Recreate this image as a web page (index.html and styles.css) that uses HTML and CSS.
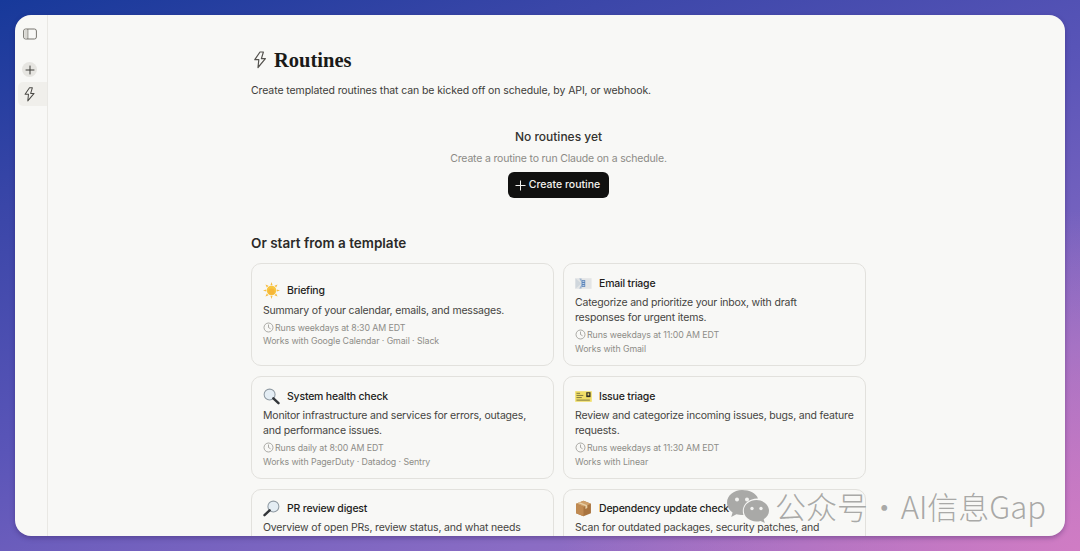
FILE: index.html
```html
<!DOCTYPE html>
<html lang="en">
<head>
<meta charset="utf-8">
<title>Routines</title>
<link rel="stylesheet" href="styles.css">
</head>
<body>
<svg class="defs" width="0" height="0" aria-hidden="true">
  <defs>
    <symbol id="bolt" viewBox="0 0 20 20"><path d="M10 2h3.400l-2 6.700h4L8 17.500l.8-7.800h-4z" fill="none" stroke="currentColor" stroke-width="1.200" stroke-linejoin="round"/></symbol>
    <symbol id="clock" viewBox="0 0 12 12"><circle cx="6" cy="6" r="4.900" fill="none" stroke="currentColor" stroke-width=".8"/><path d="M6 3.200V6l1.900 1.200" fill="none" stroke="currentColor" stroke-width=".8" stroke-linecap="round"/></symbol>
    <symbol id="lens" viewBox="0 0 18 18"><circle cx="7" cy="7" r="5.800" fill="#e4edf4" stroke="#8f9aa3" stroke-width="1.100"/><path d="M11 11l5.400 5" stroke="#33363a" stroke-width="2.600" stroke-linecap="round"/></symbol>
  </defs>
</svg>
<div class="window">
  <aside class="sidebar">
    <svg class="side-toggle" width="14" height="12" viewBox="0 0 14 12"><rect x=".6" y="1" width="12.800" height="10" rx="2" fill="none" stroke="#77756f" stroke-width="1"/><path d="M4.800 1v10" stroke="#77756f" stroke-width="1"/><rect x="1.400" y="1.800" width="3" height="8.400" fill="#d9d8d3"/></svg>
    <div class="side-plus"><svg width="10" height="10" viewBox="0 0 10 10"><path d="M5 .6v8.800M.6 5h8.800" stroke="#3d3c39" stroke-width="1"/></svg></div>
    <div class="side-active"><svg class="ico-side" width="17" height="17"><use href="#bolt"/></svg></div>
  </aside>
  <main class="main">
    <div class="column">
      <header class="page-head">
        <svg class="ico-head" width="20" height="20"><use href="#bolt"/></svg>
        <h1>Routines</h1>
      </header>
      <p class="lede">Create templated routines that can be kicked off on schedule, by API, or webhook.</p>
      <section class="empty">
        <h2>No routines yet</h2>
        <p>Create a routine to run Claude on a schedule.</p>
        <button class="cta"><svg width="11" height="11" viewBox="0 0 11 11"><path d="M5.500 .5v10M.5 5.500h10" stroke="#f4f3ef" stroke-width="1"/></svg>Create routine</button>
      </section>
      <h3 class="tpl-title">Or start from a template</h3>
      <div class="grid">
        <article class="card">
          <div class="card-title">
            <svg class="emoji" width="17" height="17" viewBox="0 0 16 16"><path d="M8 0l1 3H7zM8 16l-1-3h2zM0 8l3-1v2zM16 8l-3 1V7zM2.300 2.300l2.900 1.300-1.600 1.600zM13.700 13.700l-2.900-1.300 1.600-1.600zM13.700 2.300l-1.300 2.900-1.600-1.600zM2.300 13.700l1.300-2.900 1.600 1.600z" fill="#f6bd45"/><circle cx="8" cy="8" r="4.500" fill="#f8c640"/><circle cx="8" cy="9" r="3" fill="#f3a52f" opacity=".5"/></svg>
            <span>Briefing</span>
          </div>
          <p class="desc">Summary of your calendar, emails, and messages.</p>
          <div class="meta"><svg class="ico-clock" width="11" height="11"><use href="#clock"/></svg>Runs weekdays at 8:30 AM EDT</div>
          <div class="meta">Works with Google Calendar · Gmail · Slack</div>
        </article>
        <article class="card">
          <div class="card-title">
            <svg class="emoji" width="17" height="17" viewBox="0 0 16 16"><rect x=".4" y="3" width="15.200" height="10" fill="#e3e5e6"/><path d="M.4 3 6 8 .4 13z" fill="#cfd6dc"/><path d="M4 3.400 6.600 8 4 12.600h2.200V3.400z" fill="#9db4cf"/><rect x="6.200" y="4.800" width="3.400" height="6.400" fill="#5d86bb"/><path d="M7 6h1.900M7 8h1.900M7 10h1.900" stroke="#e8eef5" stroke-width=".7"/></svg>
            <span>Email triage</span>
          </div>
          <p class="desc">Categorize and prioritize your inbox, with draft<br>responses for urgent items.</p>
          <div class="meta"><svg class="ico-clock" width="11" height="11"><use href="#clock"/></svg>Runs weekdays at 11:00 AM EDT</div>
          <div class="meta">Works with Gmail</div>
        </article>
        <article class="card">
          <div class="card-title">
            <svg class="emoji" width="17" height="17"><use href="#lens"/></svg>
            <span>System health check</span>
          </div>
          <p class="desc">Monitor infrastructure and services for errors, outages, and performance issues.</p>
          <div class="meta"><svg class="ico-clock" width="11" height="11"><use href="#clock"/></svg>Runs daily at 8:00 AM EDT</div>
          <div class="meta">Works with PagerDuty · Datadog · Sentry</div>
        </article>
        <article class="card">
          <div class="card-title">
            <svg class="emoji" width="17" height="17" viewBox="0 0 16 16"><rect x=".2" y="3" width="15.600" height="10" fill="#f1de66"/><rect x="10.600" y="4" width="4" height="4.600" fill="#2e2c25"/><rect x="11.800" y="5" width="1.600" height="2" fill="#e9d86a"/><path d="M1.400 5h3.400M1.400 7h6.400M1.400 9h5M1.400 11.400h12.600" stroke="#6e6a3e" stroke-width=".8"/></svg>
            <span>Issue triage</span>
          </div>
          <p class="desc">Review and categorize incoming issues, bugs, and feature requests.</p>
          <div class="meta"><svg class="ico-clock" width="11" height="11"><use href="#clock"/></svg>Runs weekdays at 11:30 AM EDT</div>
          <div class="meta">Works with Linear</div>
        </article>
        <article class="card card-cut">
          <div class="card-title">
            <svg class="emoji flip" width="17" height="17"><use href="#lens"/></svg>
            <span>PR review digest</span>
          </div>
          <p class="desc">Overview of open PRs, review status, and what needs</p>
        </article>
        <article class="card card-cut">
          <div class="card-title">
            <svg class="emoji" width="17" height="17" viewBox="0 0 16 16"><path d="M8 .8 15 3.600v8.800L8 15.200 1 12.400V3.600z" fill="#a9743f"/><path d="M8 .8 15 3.600 8 6.400 1 3.600z" fill="#cfa06a"/><path d="M8 6.400v8.800L1 12.400V3.600z" fill="#c08a52"/><path d="M4.400 2.200 11.600 5v2.600l-1.800.8V5.700L2.800 2.900z" fill="#e7cfa6"/></svg>
            <span>Dependency update check</span>
          </div>
          <p class="desc">Scan for outdated packages, security patches, and</p>
        </article>
      </div>
    </div>
  </main>
</div>
<div class="watermark">
  <svg width="44" height="34" viewBox="0 0 44 34"><path d="M16 1C7.700 1 1 6.600 1 13.600c0 4 2.200 7.500 5.600 9.800L5.200 28l5.200-2.700c1.800.5 3.700.8 5.600.8l1.400-.1c-.4-1.300-.6-2.600-.6-4 0-7 6.400-12.600 14.300-12.600h.9C30.200 4.400 23.700 1 16 1z" fill="#a3a3a1"/><path d="M43 21.800c0-5.900-5.700-10.700-12.600-10.700s-12.600 4.800-12.600 10.700 5.700 10.700 12.600 10.700c1.500 0 2.900-.2 4.200-.6l4.200 2.100-1.100-3.700c3.300-2 5.300-5 5.300-8.500z" fill="#a3a3a1"/><circle cx="11" cy="10.500" r="2" fill="#f2f2f0"/><circle cx="21" cy="10.500" r="2" fill="#f2f2f0"/><circle cx="26" cy="19.500" r="1.700" fill="#f2f2f0"/><circle cx="35" cy="19.500" r="1.700" fill="#f2f2f0"/></svg>
  <span>公众号 · AI信息Gap</span>
</div>
</body>
</html>
```
FILE: styles.css
```css
* { box-sizing: border-box; }
html, body { margin: 0; height: 100%; }
body {
  height: 551px;
  overflow: hidden;
  padding: 15px;
  background:
    radial-gradient(520px 340px at 100% 100%, #d07cc4 0%, rgba(208,124,196,0) 100%),
    linear-gradient(160deg, #17399a 0%, #3a46a8 22%, #5a55b8 48%, #8a6cc4 78%, #a86ec0 100%);
  font-family: "Inter", "Liberation Sans", sans-serif;
  color: #3d3c39;
  position: relative;
}
.defs { position: absolute; }
.window {
  display: flex;
  width: 1050px;
  height: 521px;
  background: #f8f8f6;
  border-radius: 16px;
  overflow: hidden;
  box-shadow: 0 2px 5px rgba(40,20,80,.35);
}
.sidebar {
  width: 33px;
  flex: none;
  border-right: 1px solid #e9e8e4;
  display: flex;
  flex-direction: column;
  align-items: flex-end;
  padding-top: 13px;
}
.side-toggle { display: block; margin-right: 10px; }
.side-plus {
  width: 15px;
  height: 15px;
  margin-top: 22px;
  margin-right: 10px;
  border-radius: 50%;
  background: #e6e5e1;
  display: flex;
  align-items: center;
  justify-content: center;
}
.side-active {
  width: 29px;
  height: 24px;
  margin-top: 5px;
  padding-left: 3px;
  background: #f0efeb;
  border-radius: 5px 0 0 5px;
  display: flex;
  align-items: center;
  color: #4a4945;
}
.main { flex: 1; min-width: 0; overflow: hidden; padding-left: 203px; }
.column { width: 615px; padding-top: 35px; }
.page-head { display: flex; align-items: center; gap: 4px; height: 20px; }
.ico-head { color: #55534f; margin-left: -1px; flex: none; }
h1 {
  margin: 0;
  font: 700 20.500px/20px "Liberation Serif", serif;
  color: #1a1a18;
}
.lede { margin: 13px 0 0; font-size: 10.500px; line-height: 15px; letter-spacing: -.1px; color: #3d3c39; }
.empty { display: flex; flex-direction: column; align-items: center; margin-top: 31px; }
.empty h2 { margin: 0; font-size: 12px; line-height: 15px; font-weight: 500; color: #33322f; }
.empty p { margin: 7px 0 0; font-size: 10.500px; line-height: 15px; letter-spacing: -.18px; color: #8c8b86; }
.cta {
  display: flex;
  align-items: center;
  gap: 3px;
  height: 26px;
  margin-top: 6px;
  padding: 0 9px 0 7px;
  border: 0;
  border-radius: 6px;
  background: #111110;
  color: #f4f3ef;
  font: 500 10.500px/1 "Inter", "Liberation Sans", sans-serif;
}
.tpl-title { margin: 37px 0 0; font-size: 13.500px; line-height: 16px; font-weight: 600; color: #2b2a28; }
.grid {
  display: grid;
  grid-template-columns: 303px 303px;
  grid-auto-rows: 103px;
  gap: 10px 9px;
  margin-top: 12px;
}
.card {
  display: flex;
  flex-direction: column;
  justify-content: center;
  padding: 0 11px;
  border: 1px solid #e2e1dd;
  border-radius: 10px;
}
.card-cut { justify-content: flex-start; padding-top: 9px; }
.card-title { display: flex; align-items: center; gap: 7px; height: 18px; font-size: 10.500px; font-weight: 500; letter-spacing: -.2px; color: #1f1e1c; }
.emoji { flex: none; }
.flip { transform: scaleX(-1); }
.desc { margin: 3px 0 0; font-size: 10.500px; line-height: 15px; letter-spacing: -.18px; color: #45443f; }
.meta { display: flex; align-items: center; font-size: 8.800px; line-height: 13.500px; letter-spacing: -.08px; color: #8e8d88; }
.desc + .meta { margin-top: 3px; }
.ico-clock { margin-right: 1px; flex: none; }
.watermark {
  position: absolute;
  left: 726px;
  top: 489px;
  display: flex;
  align-items: center;
  gap: 5px;
  opacity: .92;
  color: rgba(140,140,138,.8);
  font: 300 31px/34px "Noto Sans CJK SC", sans-serif;
  word-spacing: -6px;
  white-space: nowrap;
}
```
